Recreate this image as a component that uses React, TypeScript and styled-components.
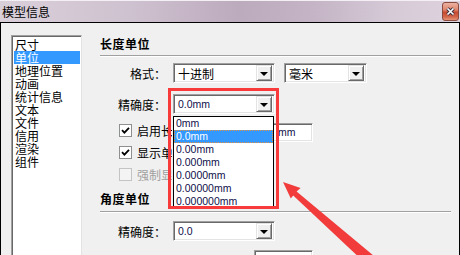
import React from 'react';
import styled, { createGlobalStyle, css } from 'styled-components';

const GlobalStyle = createGlobalStyle`
  html, body {
    margin: 0;
    padding: 0;
    background: #f0f0f0;
    overflow: hidden;
  }
  body {
    font-family: 'Noto Sans CJK SC', 'Noto Sans', sans-serif;
    font-size: 12px;
    color: #000;
  }
`;

const Window = styled.div`
  position: relative;
  width: 460px;
  height: 255px;
  overflow: hidden;
  display: flex;
  flex-direction: column;
  background: #f0f0f0;
`;

const TitleBar = styled.div`
  flex: 0 0 22px;
  display: flex;
  align-items: center;
  justify-content: space-between;
  padding: 0 1px 0 2px;
  box-sizing: border-box;
  border-top: 1px solid #f4eff4;
  background: linear-gradient(90deg, #d9cfd9 0%, #cfc2d0 28%, #bcaabd 52%, #c4b4c5 68%, #d6cad7 85%, #ddd2de 100%);
`;

const Title = styled.div`
  font-size: 12px;
  line-height: 14px;
  color: #000;
`;

const CloseButton = styled.div`
  width: 17px;
  height: 19px;
  box-sizing: border-box;
  border: 1px solid #8b4a40;
  border-radius: 3px;
  display: flex;
  align-items: center;
  justify-content: center;
  background: linear-gradient(180deg, #eab3a2 0%, #e0856c 40%, #c84a30 55%, #d26448 80%, #e49478 100%);
`;

const Body = styled.div`
  flex: 1;
  display: flex;
  align-items: flex-start;
  padding: 12px 8px 0 10px;
  border-top: 1px solid #000;
  border-left: 1px solid #000;
  border-right: 1px solid #000;
  overflow: hidden;
`;

const CategoryList = styled.div`
  flex: 0 0 71px;
  height: 240px;
  box-sizing: border-box;
  background: #fff;
  border-top: 1px solid #a0a0a0;
  border-left: 1px solid #a0a0a0;
  border-right: 1px solid #e3e3e3;
  box-shadow: inset 1px 1px 0 #696969;
  padding: 2px 1px 0 2px;
`;

const CategoryItem = styled.div<{ $selected?: boolean }>`
  height: 13px;
  line-height: 13px;
  padding-left: 1px;
  font-size: 12px;
  white-space: nowrap;
  ${(p) =>
    p.$selected &&
    css`
      background: #3399ff;
      color: #fff;
    `}
`;

const Panel = styled.div`
  flex: 0 0 351px;
  margin-left: 18px;
  display: flex;
  flex-direction: column;
`;

const SectionHeading = styled.div<{ $top: number }>`
  height: 16px;
  line-height: 16px;
  margin-top: ${(p) => p.$top}px;
  font-size: 12px;
  font-weight: bold;
  letter-spacing: 0.5px;
`;

const Divider = styled.div<{ $top: number }>`
  margin-top: ${(p) => p.$top}px;
  height: 1px;
  background: #a0a0a0;
  border-bottom: 1px solid #fff;
`;

const FieldRow = styled.div<{ $top: number }>`
  display: flex;
  align-items: center;
  height: 20px;
  margin-top: ${(p) => p.$top}px;
`;

const FieldLabel = styled.div`
  flex: 0 0 66px;
  text-align: right;
  margin-right: 7px;
  font-size: 12px;
  white-space: nowrap;
`;

const ComboWrap = styled.div`
  position: relative;
  display: flex;
`;

const sunken = css`
  box-sizing: border-box;
  background: #fff;
  border-top: 1px solid #a0a0a0;
  border-left: 1px solid #a0a0a0;
  border-right: 1px solid #fff;
  border-bottom: 1px solid #fff;
  box-shadow: inset 1px 1px 0 #696969, inset -1px -1px 0 #e3e3e3;
`;

const Combo = styled.div<{ $width: number; $gap?: number }>`
  ${sunken};
  width: ${(p) => p.$width}px;
  height: 20px;
  margin-left: ${(p) => p.$gap ?? 0}px;
  display: flex;
  align-items: center;
  padding: 2px 2px 2px 4px;
`;

const ComboText = styled.div<{ $latin?: boolean }>`
  flex: 1;
  white-space: nowrap;
  font-size: 12px;
  ${(p) =>
    p.$latin &&
    css`
      font-family: 'Liberation Sans', Arial, sans-serif;
      font-size: 10.5px;
      color: #10104a;
    `}
`;

const ComboButton = styled.div`
  flex: 0 0 16px;
  height: 16px;
  box-sizing: border-box;
  background: #f0f0f0;
  border-top: 1px solid #e3e3e3;
  border-left: 1px solid #e3e3e3;
  border-right: 1px solid #696969;
  border-bottom: 1px solid #696969;
  box-shadow: inset 1px 1px 0 #fff, inset -1px -1px 0 #a0a0a0;
  display: flex;
  align-items: center;
  justify-content: center;

  &::after {
    content: '';
    border-left: 4px solid transparent;
    border-right: 4px solid transparent;
    border-top: 4px solid #000;
    margin-top: 1px;
  }
`;

const DropList = styled.div`
  position: absolute;
  left: 0;
  top: 22px;
  width: 101px;
  box-sizing: border-box;
  background: #fff;
  border: 1px solid #000;
  z-index: 2;
`;

const DropItem = styled.div<{ $selected?: boolean }>`
  height: 13px;
  line-height: 13px;
  padding-left: 2px;
  box-sizing: border-box;
  font-family: 'Liberation Sans', Arial, sans-serif;
  font-size: 10.5px;
  color: #10104a;
  ${(p) =>
    p.$selected &&
    css`
      background: #3399ff;
      color: #fff;
      outline: 1px dotted #e09040;
      outline-offset: -1px;
    `}
`;

const Callout = styled.div`
  position: absolute;
  left: -5px;
  top: -6px;
  width: 111px;
  height: 121px;
  box-sizing: border-box;
  border: 3px solid #f83a3a;
  z-index: 3;
  pointer-events: none;
`;

const CheckRow = styled.div<{ $top?: number }>`
  display: flex;
  align-items: center;
  height: 22px;
  margin-top: ${(p) => p.$top ?? 0}px;
  padding-left: 19px;
`;

const CheckBox = styled.div<{ $disabled?: boolean }>`
  flex: 0 0 13px;
  height: 13px;
  box-sizing: border-box;
  border: 1px solid ${(p) => (p.$disabled ? '#c4c4c4' : '#8e8f8f')};
  background: ${(p) => (p.$disabled ? '#f4f4f4' : '#fff')};
  display: flex;
  align-items: center;
  justify-content: center;
`;

/* the open drop-down covers the rest of these labels */
const CheckLabel = styled.div<{ $disabled?: boolean }>`
  flex: 0 0 35px;
  margin-left: 5px;
  white-space: nowrap;
  overflow: hidden;
  font-size: 12px;
  color: ${(p) => (p.$disabled ? '#a0a0a0' : '#000')};
`;

const TextField = styled.div<{ $gap: number; $top?: number; $indent?: number }>`
  ${sunken};
  width: 59px;
  height: 19px;
  margin-left: ${(p) => p.$gap}px;
  align-self: flex-start;
  margin-top: ${(p) => p.$top ?? 0}px;
  padding: 0 4px 0 ${(p) => p.$indent ?? 4}px;
  line-height: 17px;
  font-family: 'Liberation Sans', Arial, sans-serif;
  font-size: 10.5px;
  color: #10104a;
  white-space: nowrap;
  overflow: hidden;
`;

const Arrow = styled.svg`
  position: absolute;
  left: 0;
  top: 0;
  pointer-events: none;
  z-index: 4;
`;

const categories = ['尺寸', '单位', '地理位置', '动画', '统计信息', '文本', '文件', '信用', '渲染', '组件'];
const precisions = ['0mm', '0.0mm', '0.00mm', '0.000mm', '0.0000mm', '0.00000mm', '0.000000mm'];

const Tick: React.FC = () => (
  <svg width="9" height="9" viewBox="0 0 9 9">
    <path d="M1 4.2 L3.4 6.6 L8 1.8" fill="none" stroke="#000" strokeWidth="1.8" />
  </svg>
);

const App: React.FC = () => {
  return (
    <>
      <GlobalStyle />
      <Window>
        <TitleBar>
          <Title>模型信息</Title>
          <CloseButton>
            <svg width="9" height="9" viewBox="0 0 9 9">
              <path d="M1.5 1.5 L7.5 7.5 M7.5 1.5 L1.5 7.5" stroke="#3a3040" strokeWidth="3.4" />
              <path d="M1.5 1.5 L7.5 7.5 M7.5 1.5 L1.5 7.5" stroke="#fff" strokeWidth="1.6" />
            </svg>
          </CloseButton>
        </TitleBar>
        <Body>
          <CategoryList>
            {categories.map((c, i) => (
              <CategoryItem key={c} $selected={i === 1}>
                {c}
              </CategoryItem>
            ))}
          </CategoryList>
          <Panel>
            <SectionHeading $top={1}>长度单位</SectionHeading>
            <Divider $top={3} />
            <FieldRow $top={6}>
              <FieldLabel>格式：</FieldLabel>
              <Combo $width={102}>
                <ComboText>十进制</ComboText>
                <ComboButton />
              </Combo>
              <Combo $width={83} $gap={9}>
                <ComboText>毫米</ComboText>
                <ComboButton />
              </Combo>
            </FieldRow>
            <FieldRow $top={11}>
              <FieldLabel>精确度：</FieldLabel>
              <ComboWrap>
                <Combo $width={102}>
                  <ComboText $latin>0.0mm</ComboText>
                  <ComboButton />
                </Combo>
                <DropList>
                  {precisions.map((p, i) => (
                    <DropItem key={p} $selected={i === 1}>
                      {p}
                    </DropItem>
                  ))}
                </DropList>
                <Callout />
              </ComboWrap>
            </FieldRow>
            <CheckRow $top={5}>
              <CheckBox>
                <Tick />
              </CheckBox>
              <CheckLabel>启用长度比例</CheckLabel>
              <TextField $gap={82} $top={4} $indent={23}>
                mm
              </TextField>
            </CheckRow>
            <CheckRow>
              <CheckBox>
                <Tick />
              </CheckBox>
              <CheckLabel>显示单位</CheckLabel>
            </CheckRow>
            <CheckRow>
              <CheckBox $disabled />
              <CheckLabel $disabled>强制显示单位</CheckLabel>
            </CheckRow>
            <SectionHeading $top={6}>角度单位</SectionHeading>
            <Divider $top={4} />
            <FieldRow $top={8}>
              <FieldLabel>精确度：</FieldLabel>
              <Combo $width={102}>
                <ComboText $latin>0.0</ComboText>
                <ComboButton />
              </Combo>
            </FieldRow>
            <FieldRow $top={9}>
              <TextField $gap={154}> </TextField>
            </FieldRow>
          </Panel>
        </Body>
        <Arrow width="460" height="255" viewBox="0 0 460 255">
          <polygon points="283,182 300.6,188 296.6,191.6 374,256 364,262 293.2,195.4 290.8,198.6" fill="#f23c3c" />
        </Arrow>
      </Window>
    </>
  );
};

export default App;
